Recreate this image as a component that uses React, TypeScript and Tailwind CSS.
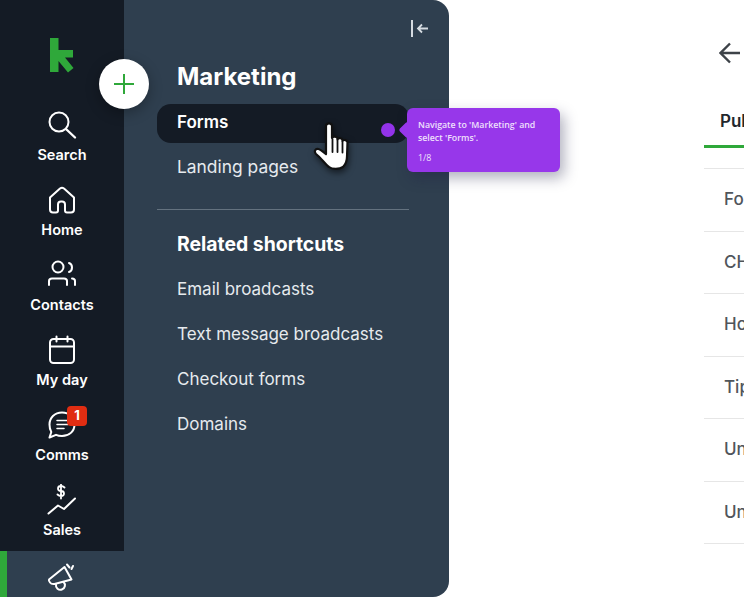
import { ReactNode } from "react";

function Icono({ children }: { children: ReactNode }) {
  return (
    <svg
      width="32"
      height="32"
      viewBox="0 0 32 32"
      fill="none"
      stroke="currentColor"
      strokeWidth="2"
      strokeLinecap="round"
      strokeLinejoin="round"
    >
      {children}
    </svg>
  );
}

const itensRail = [
  {
    nome: "Search",
    icone: (
      <>
        <circle cx="13" cy="13" r="9.500" />
        <path d="M20.500 20.500l8.500 8" strokeWidth="2.400" />
      </>
    ),
  },
  {
    nome: "Home",
    icone: (
      <path d="M4 13.500L14 4.500q2-1.500 4 0l10 9v12q0 3-3 3h-4q-2 0-2-2v-6q0-3-3-3h-1q-3 0-3 3v6q0 2-2 2H7q-3 0-3-3z" />
    ),
  },
  {
    nome: "Contacts",
    icone: (
      <>
        <circle cx="12" cy="8" r="5.500" />
        <path d="M3 26v-4q0-2.500 3-2.500h12q3 0 3 2.500v4" />
        <path d="M23 4q3 1 3 4.500T23 13" />
        <path d="M26 19.500q3 0 3 2.500v4" />
      </>
    ),
  },
  {
    nome: "My day",
    icone: (
      <>
        <rect x="4" y="5" width="24" height="24" rx="3.500" />
        <path d="M4 12.500h24M10.500 2.500v5M21.500 2.500v5" />
      </>
    ),
  },
  {
    nome: "Comms",
    icone: (
      <>
        <path d="M16 3.500c7.500 0 12.500 5 12.500 12S23 27 16 27c-2.500 0-4.500-.5-6-1.200L3.500 28.500l1.800-5.500C4 21 3.500 18 3.500 15.500 3.500 9 8.500 3.500 16 3.500z" />
        <path d="M11 11.500h11M11 15.500h11M11 19.500h7" strokeWidth="1.500" />
      </>
    ),
  },
  {
    nome: "Sales",
    icone: (
      <>
        <path d="M2.500 29.500l9.500-8 6 3.500L29 14.500" />
        <path
          d="M18.500 3.500q-1.500-1.500-3.500-1.500-3 0-3 2.500t3 2.500 3 2.500-3 2.500q-2 0-3.500-1.500M15 .5v14"
          strokeWidth="1.800"
        />
      </>
    ),
  },
];

const atalhos = [
  "Email broadcasts",
  "Text message broadcasts",
  "Checkout forms",
  "Domains",
];

const linhas = ["Forms", "CHAT", "How", "Tips", "Untitled", "Untitled"];

export default function App() {
  return (
    <div className="relative flex h-[597px] w-[744px] overflow-hidden bg-white font-['Inter',sans-serif]">
      <nav className="flex h-full w-[449px] shrink-0 overflow-hidden rounded-r-[16px] bg-[#2f3f4f] text-white">
        <div className="flex w-[124px] shrink-0 flex-col">
          <div className="bg-[#141b25]">
            <div className="flex h-[100px] justify-center pt-[37px]">
              <svg width="24" height="36" viewBox="0 0 24 36">
                <path
                  d="M0 1h8.500v12H23v7.500h-8l8.500 10.500-5.500 4.500-9.500-11.500v2.500L8.500 35H0z"
                  fill="#2fa83a"
                />
              </svg>
            </div>
            {itensRail.map((item) => (
              <div
                key={item.nome}
                className="relative flex h-[75px] flex-col items-center pt-[9px]"
              >
                <Icono>{item.icone}</Icono>
                {item.nome === "Comms" && (
                  <span className="absolute left-[67px] top-[6px] flex h-[20px] w-[20px] items-center justify-center rounded-[4px] bg-[#e02d12] text-[13px] font-bold">
                    1
                  </span>
                )}
                <span className="mt-[5px] text-[14.500px] leading-[18px] font-semibold">
                  {item.nome}
                </span>
              </div>
            ))}
            <div className="h-[1px]" />
          </div>
          <div className="flex flex-1">
            <div className="w-[7px] bg-[#2fa83a]" />
            <div className="flex flex-1 justify-center pr-[7px] pt-[9px]">
              <Icono>
                <path d="M3 19.500L18.500 7l7 12.500-17 4.500q-3 .5-4.500-1.500t-1-3z" />
                <path d="M10 24.500a4.500 4.500 0 1 0 7.500-2.500" />
                <path d="M21 4.500l2.500 3M27 6l-1.500 3" />
              </Icono>
            </div>
          </div>
        </div>

        <div className="relative flex-1 pl-[33px] pr-[40px]">
          <svg
            className="absolute right-[21px] top-[20px] text-[#d5dbe1]"
            width="18"
            height="17"
            viewBox="0 0 18 17"
            fill="none"
            stroke="currentColor"
            strokeWidth="2"
          >
            <path d="M2 0v17" />
            <path d="M18 8.500H8M12 4.500l-4 4 4 4" strokeWidth="1.800" />
          </svg>

          <h1 className="ml-[20px] pt-[62px] text-[24px] leading-[30px] font-bold">
            Marketing
          </h1>
          <div className="mt-[12px] flex h-[39px] items-center rounded-[14px] bg-[#141b25] pb-[2px] pl-[20px] text-[17px] font-semibold">
            Forms
          </div>
          <div className="flex h-[45px] items-center pl-[20px] pt-[4px] text-[17.400px] text-[#e6eaee]">
            Landing pages
          </div>
          <div className="mt-[21px] h-px bg-[#64727f]" />
          <h2 className="ml-[20px] mt-[21px] text-[19.400px] leading-[26px] font-bold">
            Related shortcuts
          </h2>
          <ul className="mt-[10px] pl-[20px] text-[17px] text-[#e6eaee]">
            {atalhos.map((atalho) => (
              <li key={atalho} className="flex h-[45px] items-center">
                {atalho}
              </li>
            ))}
          </ul>
        </div>
      </nav>

      <main className="min-w-0 flex-1 pl-[255px] text-[#50555b]">
        <svg
          className="ml-[15px] mt-[42px] text-[#3d4248]"
          width="21"
          height="22"
          viewBox="0 0 21 22"
          fill="none"
          stroke="currentColor"
          strokeWidth="2.400"
        >
          <path d="M21 11H2M11 1.500L1.500 11l9.500 9.500" />
        </svg>
        <div className="mt-[45px] h-[39px] overflow-hidden whitespace-nowrap border-b-[3px] border-[#2fa83a] pl-[16px] text-[17px] leading-[24px] font-semibold text-[#22272d]">
          Published
        </div>
        <div className="mt-[20px] border-t border-[#e6e6e6]">
          {linhas.map((linha, i) => (
            <div
              key={i}
              className="flex h-[62.500px] items-center overflow-hidden whitespace-nowrap border-b border-[#e6e6e6] pl-[20px] text-[17px] font-medium"
            >
              {linha}
            </div>
          ))}
        </div>
      </main>

      {/* botão flutuante */}
      <button className="absolute left-[99px] top-[59px] flex h-[50px] w-[50px] items-center justify-center rounded-full bg-white shadow-[0_4px_14px_rgba(0,0,0,0.3)]">
        <svg width="22" height="22" viewBox="0 0 22 22" stroke="#2fa83a" strokeWidth="2">
          <path d="M11 1v20M1 11h20" />
        </svg>
      </button>

      {/* tour */}
      <div className="absolute left-[381px] top-[123px] h-[14px] w-[14px] rounded-full bg-[#9333ea]" />
      <div className="absolute left-[407px] top-[108px] h-[64px] w-[153px] rounded-[6px] bg-[#9737ea] pl-[11px] pr-[18px] pt-[11px] font-['Open_Sans',sans-serif] text-[8.800px] leading-[13px] font-semibold text-[#efe0fc] shadow-[4px_6px_14px_rgba(30,30,70,0.35)]">
        <div className="absolute left-[-6px] top-[16px] h-[12px] w-[12px] rotate-45 rounded-[2px] bg-[#9737ea]" />
        <p className="relative">Navigate to 'Marketing' and select 'Forms'.</p>
        <p className="relative mt-[7px] font-normal">1/8</p>
      </div>

      {/* cursor */}
      <svg
        className="absolute left-[313px] top-[122px] drop-shadow-[1px_3px_3px_rgba(0,0,0,0.55)]"
        width="38"
        height="49"
        viewBox="0 0 38 49"
      >
        <path
          d="M13 4c0-3.500 6-3.500 6 0v12c.5-2 5-2 5.500 .5v1c.5-2 4.500-2 5 .5v1c.5-1.500 5-1.500 5 1.500l-.5 14c0 5-1.500 8-4 10.500-3.500 2.500-11 2.500-14 0-4-3-8-9-13-13-2.500-2.500-.5-6 2.500-5 2 .5 4 2.500 7.500 5z"
          fill="#fff"
          stroke="#111"
          strokeWidth="2.200"
          strokeLinejoin="round"
        />
        <path
          d="M19.500 17v13M24.500 18v12M29.500 19.500v11"
          stroke="#111"
          strokeWidth="1.800"
          strokeLinecap="round"
        />
      </svg>
    </div>
  );
}
